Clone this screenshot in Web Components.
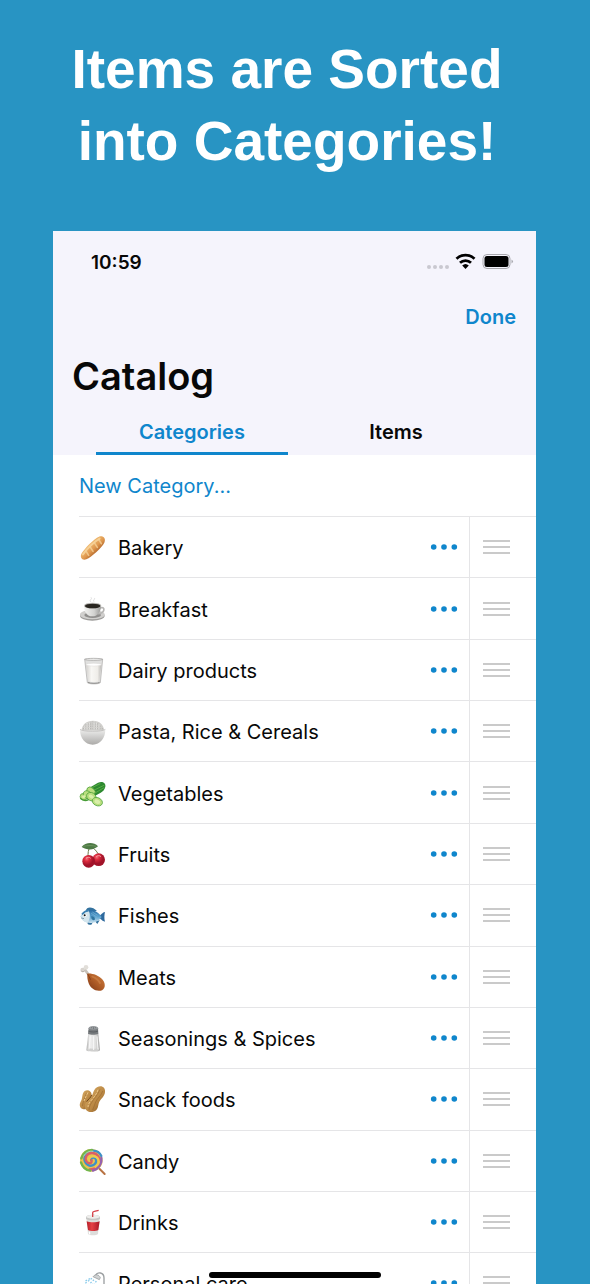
<!DOCTYPE html>
<html lang="en">
<head>
<meta charset="utf-8">
<meta name="viewport" content="width=device-width, initial-scale=1">
<title>Catalog</title>
<style>
  body {
    margin: 0;
    background-color: #2894c3;
    font-family: Inter, "Noto Sans", sans-serif;
  }
</style>
</head>
<body>
<catalog-promo>
  <span slot="headline">Items are Sorted<br>into Categories!</span>
  <phone-screen>
    <catalog-header slot="header" time="10:59" heading="Catalog"></catalog-header>
    <category-row icon="bread">Bakery</category-row>
    <category-row icon="coffee">Breakfast</category-row>
    <category-row icon="milk">Dairy products</category-row>
    <category-row icon="rice">Pasta, Rice &amp; Cereals</category-row>
    <category-row icon="cucumber">Vegetables</category-row>
    <category-row icon="cherries">Fruits</category-row>
    <category-row icon="fish">Fishes</category-row>
    <category-row icon="meat">Meats</category-row>
    <category-row icon="salt">Seasonings &amp; Spices</category-row>
    <category-row icon="peanuts">Snack foods</category-row>
    <category-row icon="lollipop">Candy</category-row>
    <category-row icon="drink">Drinks</category-row>
    <category-row icon="shower">Personal care</category-row>
  </phone-screen>
</catalog-promo>

<script>
// every icon is drawn in a 78x78 box
const icons = {
  bread: `
    <defs><linearGradient id="g" x1=".2" y1=".2" x2=".8" y2=".8"><stop offset=".2" stop-color="#f0bd76"/><stop offset=".55" stop-color="#e0994f"/><stop offset=".8" stop-color="#b4682c"/></linearGradient></defs>
    <path d="M8 58C16 44 45 14 60 8c12-4 22 5 16 18C69 41 38 68 22 76 10 81 1 70 8 58Z" fill="url(#g)"/>
    <path d="M12 61C23 45 46 22 62 14" fill="none" stroke="#f6cf93" stroke-width="6" stroke-linecap="round"/>
    <path d="m20 50 9 14M33 38l9 14M46 26l9 14M59 16l8 13" stroke="#f7d49b" stroke-width="5" stroke-linecap="round" opacity=".75"/>`,
  coffee: `
    <defs><linearGradient id="g"><stop stop-color="#f4f4f2"/><stop offset=".6" stop-color="#d2d2d0"/><stop offset="1" stop-color="#999997"/></linearGradient></defs>
    <ellipse cx="40" cy="59" rx="37" ry="15" fill="#9c9b99"/>
    <ellipse cx="40" cy="56" rx="37" ry="14" fill="#d0cfcd"/>
    <ellipse cx="41" cy="57" rx="25" ry="9" fill="#908f8d"/>
    <path d="M61 36c20-7 18 16-5 17" fill="none" stroke="#b7b6b4" stroke-width="5"/>
    <path d="M15 29c0 20 10 32 25 32s26-12 26-32Z" fill="url(#g)"/>
    <ellipse cx="41" cy="29" rx="26" ry="9" fill="#b9b8b4"/>
    <ellipse cx="41" cy="30" rx="23" ry="7" fill="#292620"/>
    <path d="M36 18c-8-7 6-8 0-14M45 17c-5-6 6-7 0-11" fill="none" stroke="#dedede" stroke-width="3"/>`,
  milk: `
    <defs><linearGradient id="g"><stop stop-color="#d2d0cd"/><stop offset=".35" stop-color="#f8f7f4"/><stop offset=".75" stop-color="#efede9"/><stop offset="1" stop-color="#bdbbb8"/></linearGradient></defs>
    <path d="M17 7h54l-7 70c-4 5-35 5-39 0Z" fill="#e0e0df" stroke="#aaa9a7" stroke-width="2"/>
    <path d="M21 23h46l-6 49c-5 4-29 4-33 0Z" fill="url(#g)"/>
    <ellipse cx="44" cy="23" rx="23" ry="4" fill="#fff" stroke="#d3d1ce"/>
    <ellipse cx="44" cy="7" rx="27" ry="3" fill="#f3f3f2" stroke="#9b9a98" stroke-width="2"/>
    <path d="M27 76c8 4 28 4 35 0" fill="none" stroke="#939290" stroke-width="3"/>`,
  rice: `
    <defs><linearGradient id="g" x1="0" y1="0" x2="0" y2="1"><stop stop-color="#eeeeed"/><stop offset="1" stop-color="#acaba9"/></linearGradient></defs>
    <path d="M7 38C10 18 22 8 42 8s31 11 34 30Z" fill="#d0cfcc"/>
    <path d="M14 34v-8M21 34V18M28 34V13M35 34V12M42 34V10M49 34V12M56 34V14M63 34V20M70 34v-7" stroke="#b6b5b2" stroke-width="3" stroke-dasharray="4 3"/>
    <path d="M17 34v-9M24 34V15M31 34V12M45 34V10M52 34V12M60 34V18" stroke="#eeeeed" stroke-width="2" stroke-dasharray="5 2"/>
    <path d="M3 34c7 8 69 8 76 0 0 27-15 46-38 46S3 61 3 34Z" fill="url(#g)"/>
    <path d="M3 34c7 8 69 8 76 0" fill="none" stroke="#b5b4b2" stroke-width="2"/>`,
  cucumber: `
    <path d="M25 27 57 8c12-6 24 0 22 12-2 9-8 14-14 18L43 50Z" fill="#2d8931"/>
    <path d="m35 25 28-14M44 31l31-15M50 38l25-15" stroke="#58ad43" stroke-width="3" stroke-linecap="round"/>
    <g fill="#b9de7e" stroke="#459c35" stroke-width="2">
      <ellipse cx="36" cy="33" rx="10" ry="14" transform="rotate(-50 36 33)"/>
      <ellipse cx="14" cy="50" rx="11" ry="10"/>
      <ellipse cx="25" cy="44" rx="13" ry="11" transform="rotate(25 25 44)"/>
      <ellipse cx="37" cy="50" rx="15" ry="12" transform="rotate(30 37 50)"/>
      <ellipse cx="55" cy="65" rx="16" ry="12" transform="rotate(25 55 65)"/>
    </g>
    <g fill="#d9efaa">
      <ellipse cx="37" cy="50" rx="8" ry="5" transform="rotate(30 37 50)"/><ellipse cx="55" cy="65" rx="9" ry="6" transform="rotate(25 55 65)"/><ellipse cx="14" cy="50" rx="5" ry="4"/>
    </g>
    <path d="M4 55c7 7 17 8 25 4" fill="none" stroke="#459c35" stroke-width="4"/>`,
  cherries: `
    <defs><radialGradient id="g" cx=".35" cy=".3"><stop stop-color="#f3707a"/><stop offset=".4" stop-color="#dc2b3e"/><stop offset="1" stop-color="#a11329"/></radialGradient></defs>
    <path d="M34 17c-7 8-7 20-7 33M38 17c10 8 19 17 24 31" fill="none" stroke="#6f7a4a" stroke-width="3"/>
    <path d="M8 18C18 4 44 1 57 16c-12 12-34 12-49 2Z" fill="#4d7a45"/>
    <path d="M13 16c12-3 28-3 39 0" fill="none" stroke="#7da16d" stroke-width="2"/>
    <circle cx="59" cy="56" r="19" fill="url(#g)"/><circle cx="29" cy="61" r="19" fill="url(#g)"/>
    <path d="M22 51c4-3 9-3 12 0M53 46c4-3 9-3 12 0" fill="none" stroke="#f9a3a6" stroke-width="3" stroke-linecap="round"/>`,
  fish: `
    <defs><linearGradient id="g" x1="0" y1="0" x2="0" y2="1"><stop stop-color="#286ca5"/><stop offset=".5" stop-color="#5da3cf"/><stop offset="1" stop-color="#cce3ef"/></linearGradient></defs>
    <path d="M20 27C23 13 40 13 54 27M26 58c-2 9 1 12 11 10l5-8M48 58l7 8 7-11" fill="#34729e"/>
    <path d="M58 42C67 41 70 30 78 30c-2 9-3 19 0 29-9-1-12-10-20-10Z" fill="#2e699d"/>
    <path d="M5 43C14 25 36 20 52 29c8 5 12 10 16 16-7 10-17 17-31 18C21 64 8 56 5 43Z" fill="url(#g)"/>
    <path d="M5 43c8-14 20-18 24-17 6 12 4 25-3 36C14 60 8 53 5 43Z" fill="#d4e5ed"/>
    <path d="M9 37c6-7 12-11 20-11" stroke="#3a80b2" stroke-width="5" fill="none"/>
    <path d="M37 42c9 1 12 5 10 12-8 2-11-3-10-12Z" fill="#2f749f"/>
    <path d="m40 30 16 10M36 33l18 13" stroke="#77b6da" stroke-width="2"/>
    <circle cx="18" cy="40" r="5" fill="#fff"/><circle cx="17" cy="40" r="3" fill="#111"/>
    <path d="m7 48 8 2" stroke="#59778b" stroke-width="2"/>`,
  meat: `
    <defs><linearGradient id="g" x1="0" y1="1" x2="1" y2="0"><stop stop-color="#7c3716"/><stop offset=".5" stop-color="#b05d27"/><stop offset="1" stop-color="#d08243"/></linearGradient></defs>
    <path d="m17 16 17 23" stroke="#c9c3bb" stroke-width="8"/>
    <circle cx="11" cy="18" r="7" fill="#d8d4cf"/><circle cx="21" cy="10" r="7" fill="#e1ded9"/>
    <path d="M7 21c3 3 7 3 10-1" stroke="#9e9890" stroke-width="2" fill="none"/>
    <path d="M25 29c12-2 34 4 46 18 11 13 7 31-6 33-16 3-31-8-36-22-3-9-5-19-4-29Z" fill="url(#g)"/>
    <path d="M40 38c10 4 18 10 23 19" fill="none" stroke="#d58c4f" stroke-width="6" stroke-linecap="round" opacity=".5"/>
    <path d="M25 29c4 5 6 12 10 18" stroke="#793614" stroke-width="2" fill="none"/>`,
  salt: `
    <defs><linearGradient id="g"><stop stop-color="#adadac"/><stop offset=".25" stop-color="#f0f0f0"/><stop offset=".7" stop-color="#dededd"/><stop offset="1" stop-color="#a0a09f"/></linearGradient></defs>
    <path d="M28 25h30l5 51c-6 6-35 6-41 0Z" fill="url(#g)"/>
    <path d="M26 68c10 4 25 4 33 0l1 8c-8 4-27 4-35 0Z" fill="#cfcfce"/>
    <path d="m34 34-4 39M44 34v41M54 34l3 39" stroke="#f9f9f9" stroke-width="3"/>
    <path d="M29 10c3-8 25-8 28 0l1 16c-6 4-25 4-31 0Z" fill="#777b7e"/>
    <ellipse cx="43" cy="9" rx="14" ry="5" fill="#979b9e"/>
    <path d="M28 18c8 4 22 4 29 0M36 8h2m4 0h2m4 0h2M42 11h2" stroke="#4c5053" stroke-width="2" fill="none"/>`,
  peanuts: `
    <defs><linearGradient id="g" x1="0" y1="0" x2="1" y2="1"><stop stop-color="#dbaf67"/><stop offset=".6" stop-color="#b98642"/><stop offset="1" stop-color="#7c5123"/></linearGradient></defs>
    <path d="M17 15c9-6 20-1 21 11 0 9-4 13-6 24-2 14-10 22-21 19C1 66 0 54 6 45c5-7 2-23 11-30Z" fill="url(#g)"/>
    <path d="M54 4c13-8 26 0 24 14-1 13-11 19-17 29-4 7-2 17-9 25-9 9-25 8-31-1-7-10-2-22 5-29 6-6 12-9 15-18 3-8 5-15 13-20Z" fill="url(#g)"/>
    <path d="M63 10C57 26 45 37 39 48c-5 8-9 15-9 24M71 15c-3 13-16 21-21 33-4 9-5 15-9 24M22 22c-2 10-10 22-12 38" fill="none" stroke="#8e6029" stroke-width="2" opacity=".7"/>
    <path d="M57 11c-4 14-12 23-22 34-5 6-8 11-8 18M27 19c-4 9-9 17-12 26" fill="none" stroke="#edc789" stroke-width="3" stroke-dasharray="8 3"/>
    <path d="M38 27c-2 8-11 13-15 20" fill="none" stroke="#70481d" stroke-width="3"/>`,
  lollipop: `
    <path d="m56 57 21 21" stroke="#b87343" stroke-width="6" stroke-linecap="round"/>
    <circle cx="37" cy="37" r="34" fill="#e9c44e"/>
    <g fill="none" stroke-width="7" stroke-linecap="round">
      <path d="M37 37c-4-8 10-12 14-2 4 13-12 23-25 15-18-12-9-42 16-42 12 0 21 7 25 16" stroke="#3e91c8"/>
      <path d="M37 37c4 9-8 12-14 4-8-12 2-27 17-26 21 2 28 25 16 38-6 8-15 11-24 11" stroke="#dc5f66"/>
      <path d="M7 31c5-15 17-24 32-25M6 43c4 13 14 23 28 25" stroke="#72b64d"/>
      <path d="M67 30c3 16-8 33-25 38" stroke="#9361b4"/>
      <path d="M31 31c6-9 23-8 27 4 3 8-1 16-9 21" stroke="#edca4e"/>
    </g>
    <path d="M14 25C20 13 32 8 43 10" fill="none" stroke="#fff" stroke-width="3" opacity=".5"/>`,
  drink: `
    <defs><linearGradient id="g"><stop stop-color="#b5202a"/><stop offset=".4" stop-color="#e54045"/><stop offset="1" stop-color="#a81827"/></linearGradient></defs>
    <path d="M41 25V11q0-3 5-4l13-3" fill="none" stroke="#d6424a" stroke-width="4"/>
    <path d="m22 26 5 49c4 5 26 5 30 0l5-49Z" fill="#dddddb"/>
    <path d="m23 37 4 26c8 4 23 4 31 0l4-26c-10 4-29 4-39 0Z" fill="url(#g)"/>
    <path d="M21 25c0-10 42-10 42 0v5c-8 5-34 5-42 0Z" fill="#c7c7c5"/>
    <ellipse cx="42" cy="23" rx="20" ry="6" fill="#ededeb"/><path d="M41 24v-8" stroke="#d6424a" stroke-width="4"/>
    <path d="m31 68 1 8" stroke="#fff" stroke-width="4"/>`,
  shower: `
    <path d="M75 78V24c0-18-20-19-25-9" fill="none" stroke="#9b9fa1" stroke-width="4"/>
    <path d="M42 20 61 29l3-6C60 13 49 11 42 20Z" fill="#d0d2d3" stroke="#8d9193" stroke-width="2"/>
    <path d="M39 25 19 40M45 29 23 50M52 33 35 60M33 26l-18 9M28 44 5 62M42 42 22 65" stroke="#8acbeb" stroke-width="4" stroke-dasharray="5 5"/>`
};

class CatalogPromo extends HTMLElement {
  constructor() {
    super();
    this.attachShadow({ mode: "open" }).innerHTML = `
      <style>
        :host {
          display: flex;
          flex-direction: column;
          box-sizing: border-box;
          height: 100vh;
          overflow: hidden;
          padding: 33px 54px 0 53px;
        }

        h1 {
          flex: none;
          margin: 0 15px 54px 0;
          color: white;
          font: bold 55px/72px "Liberation Sans", Arial, sans-serif;
          text-align: center;
          white-space: nowrap;
        }
      </style>
      <h1><slot name="headline"></slot></h1>
      <slot></slot>
    `;
  }
}

class PhoneScreen extends HTMLElement {
  constructor() {
    super();
    this.attachShadow({ mode: "open" }).innerHTML = `
      <style>
        :host {
          --accent: #0f86cc;
          --line: #e5e5e7;
          display: flex;
          flex: 1;
          flex-direction: column;
          min-height: 0;
          position: relative;
          background-color: white;
          color: #080808;
        }

        .new {
          flex: none;
          height: 62px;
          margin-left: 26px;
          padding: 0;
          border: 0;
          border-bottom: 1px solid var(--line);
          background: none;
          color: var(--accent);
          font: 20px/24px Inter, sans-serif;
          text-align: left;
          cursor: pointer;
        }

        /* twelve and a half rows are in view */
        .list {
          display: grid;
          flex: 1;
          grid-auto-rows: 8%;
          min-height: 0;
          margin-left: 26px;
          overflow: hidden;
        }

        .home {
          position: absolute;
          bottom: 6px;
          left: 50%;
          width: 172px;
          height: 6px;
          border-radius: 3px;
          background-color: black;
          transform: translateX(-50%);
        }
      </style>
      <slot name="header"></slot>
      <button class="new" type="button">New Category...</button>
      <div class="list" role="list"><slot></slot></div>
      <div class="home"></div>
    `;
  }
}

class CatalogHeader extends HTMLElement {
  constructor() {
    super();
    this.attachShadow({ mode: "open" }).innerHTML = `
      <style>
        :host {
          display: block;
          flex: none;
          background-color: #f5f4fc;
        }

        .status {
          display: flex;
          align-items: center;
          height: 62px;
          padding: 0 22px 0 38px;
          font-size: 19px;
          font-weight: 600;
        }

        .status svg {
          margin-left: auto;
        }

        .actions {
          display: flex;
          align-items: center;
          justify-content: flex-end;
          height: 48px;
          padding: 0 20px;
        }

        button {
          padding: 0;
          border: 0;
          background: none;
          color: inherit;
          font: 600 20px/24px Inter, sans-serif;
          cursor: pointer;
        }

        .done,
        .active {
          color: var(--accent);
        }

        h2 {
          margin: 0;
          padding: 11px 19px;
          font-size: 38px;
          font-weight: 600;
          line-height: 48px;
        }

        .tabs {
          display: flex;
          gap: 12px;
          padding: 0 44px 0 43px;
        }

        .tabs button {
          flex: 1;
          height: 44px;
          border-bottom: 3px solid transparent;
        }

        .tabs .active {
          border-bottom-color: var(--accent);
        }
      </style>
      <div class="status">
        <span class="time"></span>
        <svg width="87" height="20" viewBox="0 0 87 20" aria-hidden="true">
          <g fill="#c9c8d0"><circle cx="2" cy="15" r="2"/><circle cx="8" cy="15" r="2"/><circle cx="14" cy="15" r="2"/><circle cx="20" cy="15" r="2"/></g>
          <g fill="none" stroke="#000" stroke-width="2.8"><path d="M29.5 6.8a13 13 0 0 1 18 0"/><path d="M33 10.8a8 8 0 0 1 11 0"/></g>
          <path d="m38.5 17-3.3-3.4a4.8 4.8 0 0 1 6.6 0Z"/>
          <rect x="56" y="2.5" width="27" height="14" rx="4" fill="none" stroke="#a8a7ad"/>
          <rect x="57.5" y="4" width="24" height="11" rx="2.5"/>
          <path d="M84.5 7.5q3 2 0 4Z" fill="#a8a7ad"/>
        </svg>
      </div>
      <div class="actions"><button class="done" type="button">Done</button></div>
      <h2></h2>
      <div class="tabs" role="tablist">
        <button class="active" type="button" role="tab" aria-selected="true">Categories</button>
        <button type="button" role="tab" aria-selected="false">Items</button>
      </div>
    `;
  }

  connectedCallback() {
    this.shadowRoot.querySelector(".time").textContent = this.getAttribute("time");
    this.shadowRoot.querySelector("h2").textContent = this.getAttribute("heading");
  }
}

class CategoryRow extends HTMLElement {
  constructor() {
    super();
    this.attachShadow({ mode: "open" }).innerHTML = `
      <style>
        :host {
          display: flex;
          align-items: stretch;
          box-sizing: border-box;
          border-bottom: 1px solid var(--line);
          font-size: 20px;
          line-height: 24px;
        }

        .icon {
          flex: none;
          align-self: center;
          width: 26px;
          height: 26px;
          margin-right: 13px;
          overflow: visible;
        }

        .name {
          flex: 1;
          align-self: center;
          padding-top: 2px;
          white-space: nowrap;
        }

        button {
          display: flex;
          align-items: center;
          justify-content: center;
          padding: 0;
          border: 0;
          background: none;
          cursor: pointer;
        }

        .more {
          width: 50px;
          color: var(--accent);
        }

        .drag {
          width: 67px;
          padding-right: 13px;
          border-left: 1px solid var(--line);
          color: #cacaca;
          cursor: grab;
        }
      </style>
      <svg class="icon" viewBox="0 0 78 78" aria-hidden="true"></svg>
      <span class="name"><slot></slot></span>
      <button class="more" type="button" aria-label="More">
        <svg width="28" height="8" fill="currentColor"><circle cx="3.7" cy="4" r="2.8"/><circle cx="14" cy="4" r="2.8"/><circle cx="24.3" cy="4" r="2.8"/></svg>
      </button>
      <button class="drag" type="button" aria-label="Reorder">
        <svg width="27" height="16" stroke="currentColor" stroke-width="1.8"><path d="M0 2h27M0 8h27M0 14h27"/></svg>
      </button>
    `;
  }

  connectedCallback() {
    this.setAttribute("role", "listitem");
    this.shadowRoot.querySelector(".icon").innerHTML = icons[this.getAttribute("icon")];
  }
}

window.customElements.define("catalog-promo", CatalogPromo);
window.customElements.define("phone-screen", PhoneScreen);
window.customElements.define("catalog-header", CatalogHeader);
window.customElements.define("category-row", CategoryRow);
</script>
</body>
</html>
